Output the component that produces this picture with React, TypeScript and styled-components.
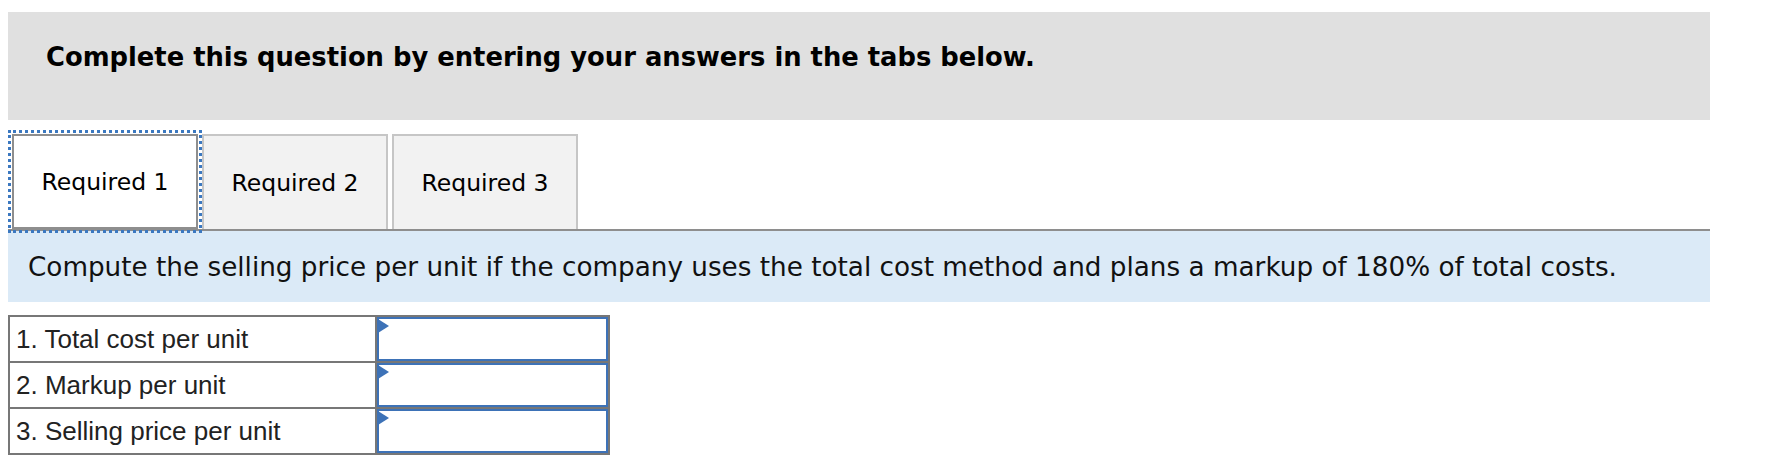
import React from "react";
import styled, { createGlobalStyle } from "styled-components";

const GlobalStyle = createGlobalStyle`
  body {
    margin: 0;
    background: #ffffff;
    font-family: "DejaVu Sans", Verdana, sans-serif;
    color: #000;
  }
`;

const Page = styled.div`
  width: 1702px;
  padding: 12px 0 0 8px;
`;

const Banner = styled.div`
  height: 108px;
  box-sizing: border-box;
  background: #e0e0e0;
  padding: 30px 0 0 38px;
  font-size: 25.8px;
  line-height: 30px;
  font-weight: bold;
`;

const TabStrip = styled.div`
  display: flex;
  gap: 4px;
  margin-top: 14px;
  padding-left: 4px;
  border-bottom: 2px solid #8e8e8e;
`;

const Tab = styled.button<{ $active?: boolean }>`
  width: 186px;
  height: 95px;
  box-sizing: border-box;
  margin-bottom: ${(p) => (p.$active ? "-2px" : "0")};
  border: 2px solid ${(p) => (p.$active ? "#8e8e8e" : "#c6c6c6")};
  border-bottom: ${(p) => (p.$active ? "2px solid #8e8e8e" : "none")};
  background: ${(p) => (p.$active ? "#ffffff" : "#f2f2f2")};
  font-family: "DejaVu Sans", Verdana, sans-serif;
  font-size: 23.5px;
  color: #000;
  padding: 0;
  outline: ${(p) => (p.$active ? "3px dotted #3b78c0" : "none")};
  outline-offset: 1px;
`;

const Instruction = styled.div`
  height: 71px;
  display: flex;
  align-items: center;
  background: #dbeaf7;
  padding-left: 20px;
  font-size: 26.25px;
  color: #111;
`;

const AnswerTable = styled.table`
  margin-top: 13px;
  border-collapse: collapse;
  font-family: "Liberation Sans", Arial, sans-serif;
  font-size: 26px;
  color: #222;
`;

const LabelCell = styled.td`
  width: 367px;
  height: 44px;
  border: 2px solid #777777;
  padding: 0 4px 0 6px;
  box-sizing: border-box;
`;

const InputCell = styled.td`
  width: 231px;
  height: 44px;
  border: 2px solid #777777;
  padding: 0;
  position: relative;
`;

const AnswerInput = styled.input`
  display: block;
  width: 100%;
  height: 44px;
  box-sizing: border-box;
  margin: 0;
  border: 2px solid #3d72b7;
  background: #fff;
  font-size: 20px;
`;

const Marker = styled.span`
  position: absolute;
  top: 2px;
  left: 1px;
  width: 0;
  height: 0;
  border-left: 11px solid #3d72b7;
  border-top: 7px solid transparent;
  border-bottom: 7px solid transparent;
`;

const rows = ["1. Total cost per unit", "2. Markup per unit", "3. Selling price per unit"];

export default function App() {
  return (
    <Page>
      <GlobalStyle />
      <Banner>Complete this question by entering your answers in the tabs below.</Banner>
      <TabStrip>
        <Tab $active>Required 1</Tab>
        <Tab>Required 2</Tab>
        <Tab>Required 3</Tab>
      </TabStrip>
      <Instruction>
        Compute the selling price per unit if the company uses the total cost method and plans a markup of 180% of total costs.
      </Instruction>
      <AnswerTable>
        <tbody>
          {rows.map((r) => (
            <tr key={r}>
              <LabelCell>{r}</LabelCell>
              <InputCell>
                <AnswerInput />
                <Marker />
              </InputCell>
            </tr>
          ))}
        </tbody>
      </AnswerTable>
    </Page>
  );
}
